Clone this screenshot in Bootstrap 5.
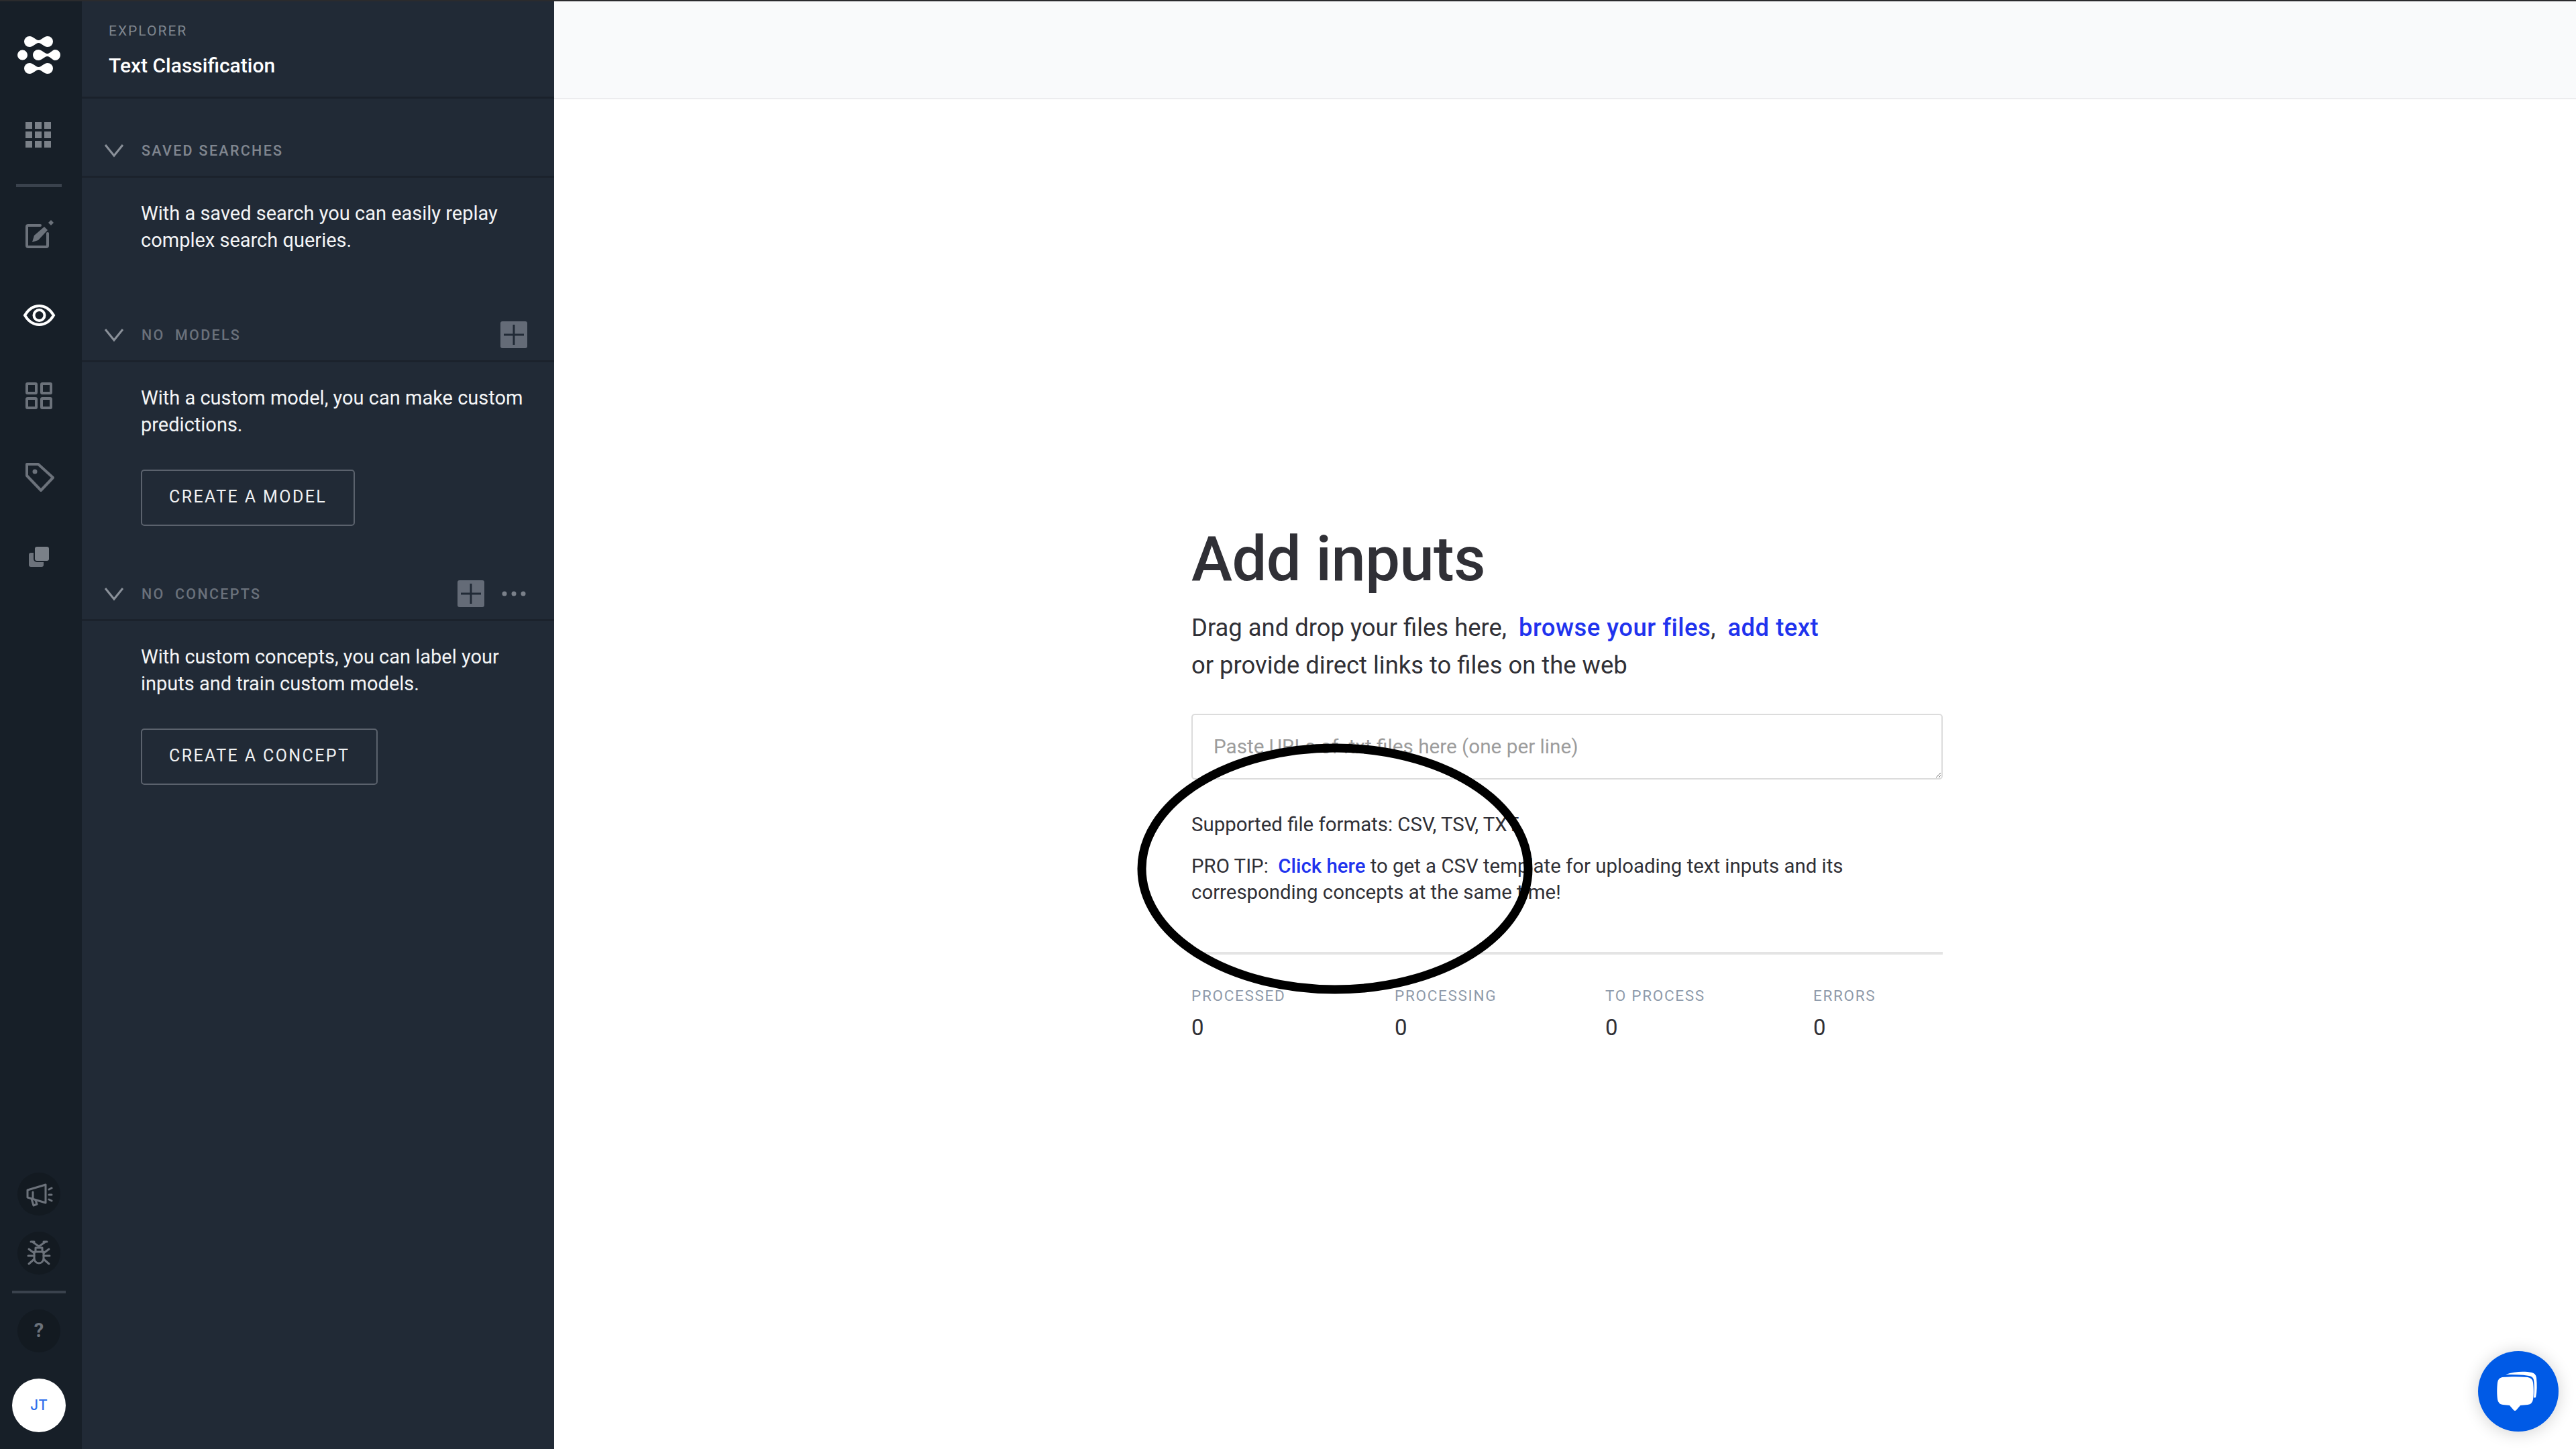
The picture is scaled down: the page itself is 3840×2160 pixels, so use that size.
<!DOCTYPE html>
<html lang="en">
<head>
<meta charset="utf-8">
<title>Add inputs</title>
<link href="https://cdn.jsdelivr.net/npm/bootstrap@5.3.0/dist/css/bootstrap.min.css" rel="stylesheet">
<style>
html,body{height:100%;margin:0;overflow:hidden}
body{font-family:Roboto,"Liberation Sans",sans-serif;background:#fff;color:#303036}
.app-shell{height:2160px;border-top:2px solid #2b2b2d;position:relative}
.rail{width:122px;background:#171f28;padding:48px 6px 25px 0}
.rail svg{display:block;flex:none}
.rail-top{margin-top:57px}
.rail-rule{height:5px;background:#3a424d;flex:none}
.rule-a{width:68px;margin-top:39px}
.rule-b{width:80px;margin-top:24px;height:4px}
.gap-39{margin-top:39px}.gap-56{margin-top:56px}
.round-tool{width:64px;height:64px;border-radius:50%;background:#131a21;color:#6c727b;flex:none;font-size:29px;font-weight:700}
.gap-24{margin-top:24px}
.avatar-dot{width:80px;height:80px;border-radius:50%;background:#fff;color:#2f6fec;font-family:Inter,sans-serif;font-size:21px;font-weight:500;margin-top:39px;flex:none}
.side-panel{width:704px;background:#212a36;color:#fff;flex:none}
.panel-title{height:145px;border-bottom:3px solid #1a212b;padding:30px 0 0 40px}
.panel-eyebrow{font-size:21px;letter-spacing:2px;color:#7e858e;line-height:28px}
.panel-name{font-size:30px;font-weight:500;line-height:40px;margin-top:18px}
.sec-head{height:80px;border-bottom:3px solid #1b222c;padding:0 40px 0 33px}
.sec-first{margin-top:38px}
.sec-label{font-size:21.500px;font-weight:500;letter-spacing:2.300px;color:#80868f;margin-left:26px;white-space:pre;padding-top:3px}
.sec-dim{color:#6a717b}
.sec-body{padding:33px 20px 33px 88px}
.sec-body p{font-size:29px;line-height:40px;margin:0;color:#f4f5f6}
.sec-body p:last-child{margin-bottom:49px}
.sec-body .btn{margin-top:47px;margin-bottom:29px;height:84px;padding:0 40px;border:2px solid #5b626d;border-radius:5px;color:#f1f2f3;font-size:25px;letter-spacing:2.400px;line-height:78px;background:transparent}
.plus-tile{width:40px;height:40px;border-radius:3px;background:#646b77;flex:none}
.more-dots{width:36px;margin-left:26px;margin-right:2px;flex:none}
.work-area{min-width:0}
.work-top{height:146px;background:#f9fafb;border-bottom:2px solid #ececee}
.work-block{width:1120px;margin-left:950px;padding-top:639px}
.work-block h1{font-size:92px;font-weight:500;line-height:110px;margin:-8px 0 0;color:#303036;letter-spacing:-.5px}
.lead-copy{font-size:36.400px;line-height:56px;margin:19px 0 0;color:#303036}
.lead-copy a{color:#2033ee;font-weight:500;text-decoration:none;letter-spacing:.5px}
.tip-copy a{color:#2033ee;font-weight:500;text-decoration:none}
.url-box.form-control{height:98px;margin-top:44px;border:2px solid #dcdcdc;border-radius:5px;padding:27px 31px 20px;font-size:29.700px;line-height:40px;resize:vertical;font-family:inherit}
.url-box.form-control::placeholder{color:#9c9c9c}
.fmt-copy{font-size:29.400px;line-height:38px;margin:48px 0 0;color:#303036}
.tip-copy{font-size:29.400px;line-height:39px;margin:24px 0 0;color:#303036}
.tip-rule{height:4px;background:#e4e4e4;margin-top:69px}
.stat-grid{display:grid;grid-template-columns:303px 314px 310px 193px;margin-top:47px}
.stat-name{font-size:22.500px;letter-spacing:1.700px;line-height:28px;color:#8f9bab}
.stat-num{font-size:33px;line-height:40px;margin-top:14px;color:#303036}
.hand-ring{position:absolute;left:1695px;top:1106px;width:590px;height:374px;pointer-events:none}
.chat-fab{position:absolute;left:3694px;top:2012px;width:120px;height:120px;border-radius:50%;background:#005ae6;box-shadow:0 2px 24px rgba(0,0,0,.18)}
</style>
</head>
<body>
<div class="app-shell d-flex">
  <nav class="rail d-flex flex-column align-items-center flex-none">
    <svg width="64" height="64" viewBox="0 0 64 64" fill="#fff" aria-label="Logo">
      <path d="M18 4C24 4 27 10 31.500 10C36 10 39 4 45 4A8 8 0 0 1 45 20C39 20 36 14 31.500 14C27 14 24 20 18 20A8 8 0 0 1 18 4Z"/>
      <circle cx="7.500" cy="32" r="7.500"/>
      <path transform="translate(13 20)" d="M18 4C24 4 27 10 31.500 10C36 10 39 4 43 4A8 8 0 0 1 43 20C39 20 36 14 31.500 14C27 14 24 20 18 20A8 8 0 0 1 18 4Z"/>
      <path transform="translate(0 40)" d="M18 4C24 4 27 10 31.500 10C36 10 39 4 45 4A8 8 0 0 1 45 20C39 20 36 14 31.500 14C27 14 24 20 18 20A8 8 0 0 1 18 4Z"/>
    </svg>
    <svg class="rail-top" width="64" height="64" viewBox="0 0 64 64" fill="#7a8088">
      <rect x="12" y="11" width="10" height="10"/><rect x="26" y="11" width="10" height="10"/><rect x="40" y="11" width="10" height="10"/>
      <rect x="12" y="25" width="10" height="10"/><rect x="26" y="25" width="10" height="10"/><rect x="40" y="25" width="10" height="10"/>
      <rect x="12" y="39" width="10" height="10"/><rect x="26" y="39" width="10" height="10"/><rect x="40" y="39" width="10" height="10"/>
    </svg>
    <div class="rail-rule rule-a"></div>
    <svg class="gap-39" width="64" height="64" viewBox="0 0 64 64" fill="#6c727b">
      <path d="M34 18H16a2 2 0 0 0-2 2V48a2 2 0 0 0 2 2H43a2 2 0 0 0 2-2V30" fill="none" stroke="#6c727b" stroke-width="4" stroke-linecap="round"/>
      <path d="M22 43L25 33L40 20L45 25L31 40Z"/>
      <path d="M50 10L54 14L50 18L46 14Z"/>
    </svg>
    <svg class="gap-56" width="64" height="64" viewBox="0 0 64 64" fill="none" stroke="#fff" stroke-width="4">
      <path d="M11 32C17 22 25 18 32.500 18C40 18 48 22 54 32C48 42 40 46 32.500 46C25 46 17 42 11 32Z"/>
      <circle cx="32.500" cy="32" r="8"/>
    </svg>
    <svg class="gap-56" width="64" height="64" viewBox="0 0 64 64" fill="none" stroke="#6c727b" stroke-width="4">
      <rect x="14" y="14" width="14" height="14" rx="1"/><rect x="36" y="14" width="14" height="14" rx="1"/>
      <rect x="14" y="36" width="14" height="14" rx="1"/><rect x="36" y="36" width="14" height="14" rx="1"/>
    </svg>
    <svg class="gap-56" width="64" height="64" viewBox="0 0 64 64" fill="none" stroke="#6c727b" stroke-width="4" stroke-linejoin="round">
      <path d="M14 14H31L53 34L35 53L14 31Z"/>
      <circle cx="26" cy="25" r="3.500" fill="#6c727b" stroke="none"/>
    </svg>
    <svg class="gap-56" width="64" height="64" viewBox="0 0 64 64">
      <rect x="17" y="26" width="22" height="21" rx="3" fill="#6c727b"/>
      <rect x="25" y="16" width="23" height="23" rx="4" fill="#7a8088" stroke="#171f28" stroke-width="2"/>
    </svg>
    <div class="mt-auto d-flex flex-column align-items-center">
      <div class="round-tool d-flex align-items-center justify-content-center">
        <svg width="64" height="64" viewBox="0 0 64 64" fill="none" stroke="#6c727b" stroke-width="3" stroke-linecap="round" stroke-linejoin="round">
          <path d="M15 26L42 18V45L15 37Z"/><path d="M23 29V38"/><path d="M21 39L24 49L29 47L27 41"/>
          <path d="M47 25L51 23M47 33H51M47 40L51 42"/>
        </svg>
      </div>
      <div class="round-tool gap-24 d-flex align-items-center justify-content-center">
        <svg width="64" height="64" viewBox="0 0 64 64" fill="none" stroke="#6c727b" stroke-width="3" stroke-linecap="round" stroke-linejoin="round">
          <path d="M25 30H39V40A7 7 0 0 1 25 40Z"/><path d="M27 30V24H37V30"/>
          <path d="M22 15L32 22L42 15M20 15H25M39 15H44"/>
          <path d="M16 36H25M39 36H48M17 26L25 32M47 26L39 32M17 48L25 41M47 48L39 41"/>
        </svg>
      </div>
      <div class="rail-rule rule-b"></div>
      <div class="round-tool gap-24 d-flex align-items-center justify-content-center">?</div>
      <div class="avatar-dot d-flex align-items-center justify-content-center">JT</div>
    </div>
  </nav>

  <aside class="side-panel">
    <div class="panel-title">
      <div class="panel-eyebrow">EXPLORER</div>
      <div class="panel-name">Text Classification</div>
    </div>

    <div class="sec-first sec-head d-flex align-items-center">
      <svg width="30" height="24" viewBox="0 0 30 24" fill="none" stroke="#8a9099" stroke-width="3"><path d="M2 4L15 20L28 4"/></svg>
      <span class="sec-label">SAVED SEARCHES</span>
    </div>
    <div class="sec-body">
      <p>With a saved search you can easily replay<br>complex search queries.</p>
    </div>

    <div class="sec-head d-flex align-items-center">
      <svg width="30" height="24" viewBox="0 0 30 24" fill="none" stroke="#8a9099" stroke-width="3"><path d="M2 4L15 20L28 4"/></svg>
      <span class="sec-label sec-dim">NO  MODELS</span>
      <svg class="plus-tile ms-auto" viewBox="0 0 40 40" stroke="#212a36" stroke-width="3"><path d="M20 5V35M5 20H35"/></svg>
    </div>
    <div class="sec-body">
      <p class="mb-0">With a custom model, you can make custom<br>predictions.</p>
      <a class="btn" href="#">CREATE A MODEL</a>
    </div>

    <div class="sec-head d-flex align-items-center">
      <svg width="30" height="24" viewBox="0 0 30 24" fill="none" stroke="#8a9099" stroke-width="3"><path d="M2 4L15 20L28 4"/></svg>
      <span class="sec-label sec-dim">NO  CONCEPTS</span>
      <svg class="plus-tile ms-auto" viewBox="0 0 40 40" stroke="#212a36" stroke-width="3"><path d="M20 5V35M5 20H35"/></svg>
      <svg class="more-dots" height="8" viewBox="0 0 36 8" fill="#7a808a"><circle cx="4" cy="4" r="3.500"/><circle cx="18" cy="4" r="3.500"/><circle cx="32" cy="4" r="3.500"/></svg>
    </div>
    <div class="sec-body">
      <p class="mb-0">With custom concepts, you can label your<br>inputs and train custom models.</p>
      <a class="btn" href="#">CREATE A CONCEPT</a>
    </div>
  </aside>

  <main class="work-area flex-grow-1 d-flex flex-column">
    <div class="work-top"></div>
    <div class="work-block">
      <h1>Add inputs</h1>
      <p class="lead-copy">Drag and drop your files here,&nbsp; <a href="#">browse your files</a>,&nbsp; <a href="#">add text</a><br>or provide direct links to files on the web</p>
      <textarea class="form-control url-box" placeholder="Paste URLs of .txt files here (one per line)"></textarea>
      <p class="fmt-copy">Supported file formats: CSV, TSV, TXT</p>
      <p class="tip-copy">PRO TIP:&nbsp; <a href="#">Click here</a> to get a CSV template for uploading text inputs and its<br>corresponding concepts at the same time!</p>
      <div class="tip-rule"></div>
      <div class="stat-grid">
        <div><div class="stat-name">PROCESSED</div><div class="stat-num">0</div></div>
        <div><div class="stat-name">PROCESSING</div><div class="stat-num">0</div></div>
        <div><div class="stat-name">TO PROCESS</div><div class="stat-num">0</div></div>
        <div><div class="stat-name">ERRORS</div><div class="stat-num">0</div></div>
      </div>
    </div>
  </main>

  <svg class="hand-ring" viewBox="0 0 590 374" fill="none" stroke="#000" stroke-width="13"><ellipse cx="295" cy="187" rx="288" ry="180"/></svg>
  <div class="chat-fab d-flex align-items-center justify-content-center">
    <svg width="120" height="120" viewBox="0 0 120 120" fill="#fff">
      <path d="M36 39C50 38 62 38 74 39Q81 40 82 47C83 55 83 65 82 72Q81 79 74 80L63 81L57 88Q55 90 53 88L47 81L37 80Q30 79 29 72C28 65 28 55 29 47Q30 40 36 39Z"/>
      <path d="M41 35C55 30 70 30 80 32Q86 33 87 40C88 50 88 60 86 69Q84 70 83 69C84 60 84 50 83 43Q82 38 76 37C65 35 52 35 41 35Z"/>
    </svg>
  </div>
</div>
<script src="https://cdn.jsdelivr.net/npm/bootstrap@5.3.0/dist/js/bootstrap.bundle.min.js"></script>
</body>
</html>
